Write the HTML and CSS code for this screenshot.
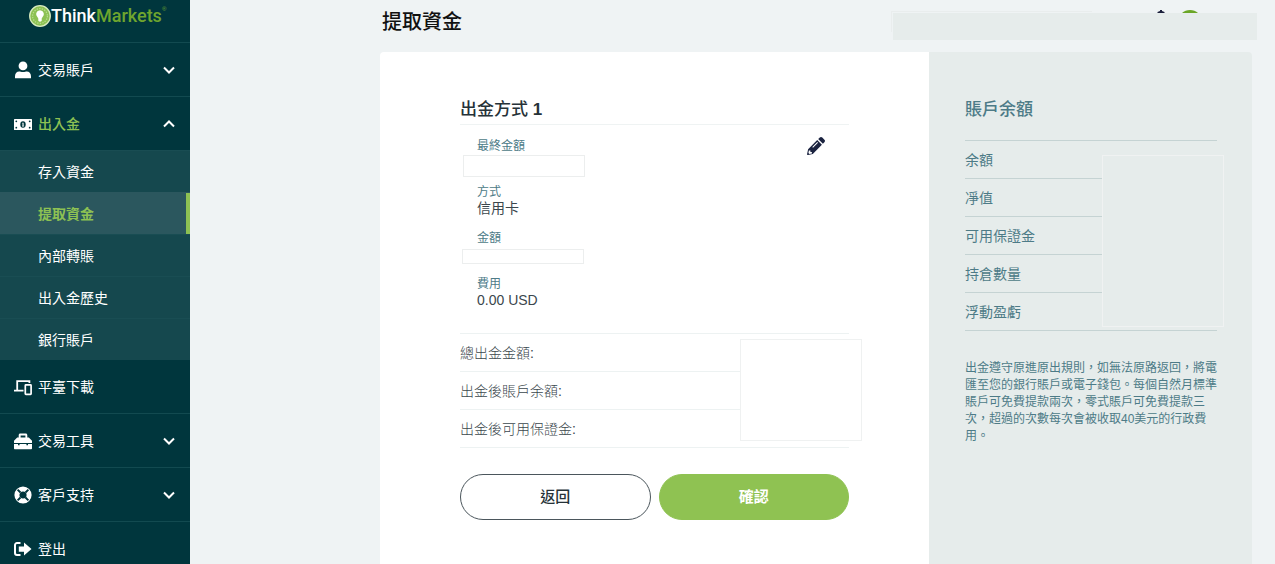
FILE: index.html
```html
<!DOCTYPE html>
<html lang="zh-Hant">
<head>
<meta charset="utf-8">
<meta name="viewport" content="width=device-width, initial-scale=1">
<title>提取資金 - ThinkMarkets</title>
<link rel="stylesheet" href="styles.css">
</head>
<body>
<div class="app">
  <aside class="sidebar">
    <a class="brand" href="#">
      <svg class="brand-mark" viewBox="0 0 22 22" aria-hidden="true">
        <circle cx="11" cy="11" r="10.3" fill="#8dc153" stroke="#d9ecc0" stroke-width="1.3"/>
        <circle cx="11" cy="11" r="7.4" fill="none" stroke="#b9dc8d" stroke-width="1.2" stroke-dasharray="1.4 1.2"/>
        <path d="M11 5.2a4 4 0 0 1 2.3 7.2c-.5.5-.6 1-.6 1.6v1.6c0 .7-.7 1.2-1.7 1.2s-1.7-.5-1.7-1.2V14c0-.6-.1-1.1-.6-1.6A4 4 0 0 1 11 5.2z" fill="#fff"/>
      </svg>
      <span class="brand-name">Think<span class="brand-accent">Markets</span></span><sup class="brand-reg">®</sup>
    </a>
    <nav>
      <ul class="menu">
        <li class="menu-item">
          <a class="menu-link" href="#">
            <svg class="icon" viewBox="0 0 18 18"><circle cx="9" cy="4.900" r="4.400"/><path d="M1 17.200v-1.900c0-2.900 1.900-4.800 4.200-4.800 1 0 2 .6 3.800.6s2.800-.6 3.800-.6c2.300 0 4.200 1.900 4.200 4.800v1.900z"/></svg>
            <span class="menu-text">交易賬戶</span>
            <svg class="chevron" viewBox="0 0 12 8"><path d="M1 1.500l5 5 5-5"/></svg>
          </a>
        </li>
        <li class="menu-item menu-item-open">
          <a class="menu-link menu-link-active" href="#">
            <svg class="icon" viewBox="0 0 18 18"><rect y="4" width="18" height="11" rx=".6"/><ellipse cx="9" cy="9.500" rx="2.700" ry="3.200" fill="#00363d"/><path d="M8.200 7.800h1.400v3h.5v.8H8v-.8h.5V8.600h-.3z"/><g fill="#00363d"><circle cx="2.300" cy="6.300" r=".9"/><circle cx="15.700" cy="6.300" r=".9"/><circle cx="2.300" cy="12.700" r=".9"/><circle cx="15.700" cy="12.700" r=".9"/></g></svg>
            <span class="menu-text">出入金</span>
            <svg class="chevron" viewBox="0 0 12 8"><path d="M1 6.500l5-5 5 5"/></svg>
          </a>
          <ul class="submenu">
            <li><a class="submenu-link" href="#">存入資金</a></li>
            <li><a class="submenu-link submenu-link-active" href="#" aria-current="page">提取資金</a></li>
            <li><a class="submenu-link" href="#">內部轉賬</a></li>
            <li><a class="submenu-link" href="#">出入金歷史</a></li>
            <li><a class="submenu-link" href="#">銀行賬戶</a></li>
          </ul>
        </li>
        <li class="menu-item">
          <a class="menu-link" href="#">
            <svg class="icon" viewBox="0 0 18 18"><path d="M3.200 12V3.200h12.200v1.900M0 12.600h9.500" fill="none" stroke="#fff" stroke-width="1.800"/><rect x="11.300" y="6.800" width="5.800" height="9.600" rx=".6" fill="none" stroke="#fff" stroke-width="1.700"/></svg>
            <span class="menu-text">平臺下載</span>
          </a>
        </li>
        <li class="menu-item">
          <a class="menu-link" href="#">
            <svg class="icon" viewBox="0 0 18 18"><path fill-rule="evenodd" d="M4.700 5.500V3.200c0-.9.700-1.600 1.600-1.600h5.400c.9 0 1.600.7 1.600 1.600v2.300h1.500L18 8.700v2.400H0V8.700l3.200-3.200zM6.600 5.500h4.800v-2H6.600z"/><path d="M0 12h4v1.300h1.600V12h6.800v1.300H14V12h4v4.200c0 .6-.4 1-1 1H1c-.6 0-1-.4-1-1z"/></svg>
            <span class="menu-text">交易工具</span>
            <svg class="chevron" viewBox="0 0 12 8"><path d="M1 1.500l5 5 5-5"/></svg>
          </a>
        </li>
        <li class="menu-item">
          <a class="menu-link" href="#">
            <svg class="icon" viewBox="0 0 18 18"><circle cx="9" cy="9" r="6.100" fill="none" stroke="#fff" stroke-width="5"/><path d="M3.600 3.600l2.900 2.900M14.400 3.600l-2.900 2.900M3.600 14.400l2.900-2.900M14.400 14.400l-2.900-2.900" stroke="#00363d" stroke-width="1.900"/></svg>
            <span class="menu-text">客戶支持</span>
            <svg class="chevron" viewBox="0 0 12 8"><path d="M1 1.500l5 5 5-5"/></svg>
          </a>
        </li>
        <li class="menu-item">
          <a class="menu-link" href="#">
            <svg class="icon" viewBox="0 0 18 18"><path d="M6.500 3.100H3a2 2 0 0 0-2 2v8a2 2 0 0 0 2 2h3.500" fill="none" stroke="#fff" stroke-width="2"/><path d="M10 2.600l7.500 6.500-7.500 6.500v-3.800H4.800V6.400H10z"/></svg>
            <span class="menu-text">登出</span>
          </a>
        </li>
      </ul>
    </nav>
  </aside>

  <main class="main">
    <header class="topbar">
      <h1 class="page-title">提取資金</h1>
      <div class="account">
        <div class="account-mask"></div>
        <svg class="account-icons" viewBox="0 0 44 3" aria-hidden="true"><path d="M4 0h2v1l2.500 1V3h-7V2L4 1z" fill="#1b1f3b"/><path d="M26 3c2-2 5-3 8-3s6 1 8 3z" fill="#6aa626"/></svg>
      </div>
    </header>

    <div class="card">
      <section class="withdraw">
        <div class="method-head"><h2 class="method-title">出金方式 <b>1</b></h2></div>
        <div class="method">
          <dl class="details">
            <div class="detail"><dt>最終金額</dt><dd><span class="mask mask-final"></span></dd></div>
            <div class="detail"><dt>方式</dt><dd>信用卡</dd></div>
            <div class="detail"><dt>金額</dt><dd>00.00 USD<span class="mask mask-amount"></span></dd></div>
            <div class="detail"><dt>費用</dt><dd>0.00 USD</dd></div>
          </dl>
          <button class="edit" type="button" aria-label="編輯">
            <svg viewBox="0 0 18 18"><path fill-rule="evenodd" fill="#1b2340" d="M10.200 3.100l4.700 4.700-9.100 9.100-4.800 1a.7.7 0 0 1-.9-.9l1-4.800zM6 10.800l5-5-.7-.7-5 5zM1.900 13.500l-.5 2.600 1 1 2.500-.5v-1.500H3.400v-1.600z"/><path fill="#1b2340" d="M11.200 2.100L12.800.6a1.800 1.800 0 0 1 2.500 0l2.100 2.100a1.800 1.800 0 0 1 0 2.500l-1.500 1.600z"/></svg>
          </button>
        </div>

        <div class="totals">
          <div class="total-row">總出金金額:</div>
          <div class="total-row">出金後賬戶余額:</div>
          <div class="total-row">出金後可用保證金:</div>
          <div class="totals-mask"></div>
        </div>

        <div class="actions">
          <button class="btn btn-outline" type="button">返回</button>
          <button class="btn btn-primary" type="button">確認</button>
        </div>
      </section>

      <aside class="balance">
        <h2 class="balance-title">賬戶余額</h2>
        <div class="balance-list">
          <div class="balance-row">余額</div>
          <div class="balance-row">凈值</div>
          <div class="balance-row">可用保證金</div>
          <div class="balance-row">持倉數量</div>
          <div class="balance-row">浮動盈虧</div>
          <div class="balance-mask"></div>
        </div>
        <p class="note">出金遵守原進原出規則，如無法原路返回，將電匯至您的銀行賬戶或電子錢包。每個自然月標準賬戶可免費提款兩次，零式賬戶可免費提款三次，超過的次數每次會被收取40美元的行政費用。</p>
      </aside>
    </div>
  </main>
</div>
</body>
</html>
```
FILE: styles.css
```css
* {
  box-sizing: border-box;
}

body {
  margin: 0;
  background: #eff3f4;
  color: #3b474d;
  font-family: "Liberation Sans", "Noto Sans CJK TC", sans-serif;
  font-size: 14px;
  line-height: 18px;
}

h1, h2, p, ul, dl, dd {
  margin: 0;
  padding: 0;
}

ul {
  list-style: none;
}

a {
  color: inherit;
  text-decoration: none;
}

.app {
  display: flex;
  height: 100vh;
  overflow: hidden;
}

/* Sidebar */
.sidebar {
  flex: none;
  width: 190px;
  background: #00363d;
  color: #fff;
}

.brand {
  display: flex;
  align-items: center;
  height: 42px;
  padding: 0 0 10px 29px;
}

.brand-mark {
  width: 22px;
  height: 22px;
}

.brand-name {
  font-family: Roboto, "Liberation Sans", sans-serif;
  font-size: 18px;
  font-weight: 500;
}

.brand-accent {
  color: #6fa52e;
}

.brand-reg {
  align-self: flex-start;
  color: #6fa52e;
  font-size: 6px;
}

.menu-item {
  border-top: 1px solid #124a50;
}

.menu-item-open + .menu-item {
  border-top: 0;
}

.menu-link {
  display: flex;
  align-items: center;
  gap: 6px;
  height: 53px;
  padding: 0 15px 0 14px;
}

.menu-link-active {
  color: #8dc153;
  font-weight: 500;
}

.menu-text {
  flex: 1;
}

.icon {
  width: 18px;
  height: 18px;
  fill: #fff;
}

.chevron {
  width: 12px;
  height: 8px;
  overflow: visible;
  fill: none;
  stroke: #fff;
  stroke-width: 2;
}

.submenu {
  background: #15484e;
}

.submenu-link {
  display: flex;
  align-items: center;
  height: 42px;
  padding-left: 38px;
  border-top: 1px solid #194d53;
}

.submenu-link-active {
  background: #2b575e;
  border-top-color: #2b575e;
  box-shadow: inset -4px 0 #8dc153;
  color: #8dc153;
  font-weight: 700;
}

/* Header */
.main {
  display: flex;
  flex: 1;
  flex-direction: column;
  min-width: 0;
  padding: 0 23px 0 190px;
}

.topbar {
  display: flex;
  flex: none;
  justify-content: space-between;
  height: 52px;
}

.page-title {
  padding: 7px 0 0 2px;
  color: #111;
  font-size: 20px;
  font-weight: 500;
  line-height: 30px;
}

.account {
  position: relative;
  width: 42%;
  padding: 13px 0 0 2px;
  margin-right: -5px;
}

.account::before {
  content: "";
  position: absolute;
  top: 11px;
  left: 0;
  width: 200px;
  height: 20px;
  border: 1px solid #e9eded;
  border-width: 1px 0 0 1px;
}

.account-mask {
  position: relative;
  height: 27px;
  background: #e6eceb;
}

.account-icons {
  position: absolute;
  top: 10px;
  right: 57px;
  width: 44px;
  height: 3px;
}

/* Card */
.card {
  display: flex;
  flex: 1;
}

.withdraw {
  flex: 1;
  padding: 44px 80px 0;
  background: #fff;
  border-radius: 4px 0 0 0;
}

.method-head {
  border-bottom: 1px solid #eff3f3;
}

.method-title {
  color: #263238;
  font-size: 17px;
  font-weight: 500;
  line-height: 28px;
}

.method {
  display: flex;
  align-items: flex-start;
  justify-content: space-between;
  padding: 12px 24px 0 17px;
}

.details {
  display: grid;
  gap: 12px;
}

.detail {
  height: 34px;
}

.detail dt {
  color: #4d7b87;
  font-size: 12px;
  line-height: 18px;
}

.detail dd {
  position: relative;
  height: 16px;
  line-height: 14px;
}

.mask {
  position: absolute;
  width: 122px;
  background: #fff;
  border: 1px solid #eceeee;
}

.mask-final {
  top: 0;
  left: -14px;
  height: 22px;
}

.mask-amount {
  top: 2px;
  left: -15px;
  height: 15px;
}

.edit {
  width: 18px;
  height: 18px;
  padding: 0;
  background: none;
  border: 0;
}

.edit svg {
  display: block;
  width: 18px;
  height: 18px;
}

.totals {
  position: relative;
  margin-top: 24px;
  border-top: 1px solid #edf2f2;
  font-weight: 300;
}

.total-row {
  padding: 10px 0 9px;
  border-bottom: 1px solid #edf2f2;
}

.totals-mask {
  position: absolute;
  top: 5px;
  right: -13px;
  width: 122px;
  height: 102px;
  background: #fff;
  border: 1px solid #eff1f1;
}

.actions {
  display: flex;
  gap: 8px;
  margin-top: 26px;
}

.btn {
  flex: 1;
  height: 46px;
  border: 1px solid #4b565c;
  border-radius: 23px;
  background: #fff;
  color: #263238;
  font: 500 15px/20px "Liberation Sans", "Noto Sans CJK TC", sans-serif;
}

.btn-primary {
  border-color: #8fc252;
  background: #8fc252;
  color: #fff;
  font-weight: 700;
}

/* Balance panel */
.balance {
  flex: none;
  width: 323px;
  padding: 44px 35px 0 36px;
  background: #e6eceb;
  border-radius: 0 4px 0 0;
  color: #4d7b87;
}

.balance-title {
  font-size: 17px;
  font-weight: 500;
  line-height: 28px;
}

.balance-list {
  position: relative;
  margin-top: 16px;
  border-top: 1px solid #c5d3d3;
}

.balance-row {
  padding: 10px 0 9px;
  border-bottom: 1px solid #c5d3d3;
}

.balance-mask {
  position: absolute;
  top: 14px;
  right: -7px;
  width: 122px;
  height: 172px;
  background: #e6eceb;
  border: 1px solid #f0f2f2;
}

.note {
  margin-top: 29px;
  font-size: 12px;
  line-height: 17px;
}
```
